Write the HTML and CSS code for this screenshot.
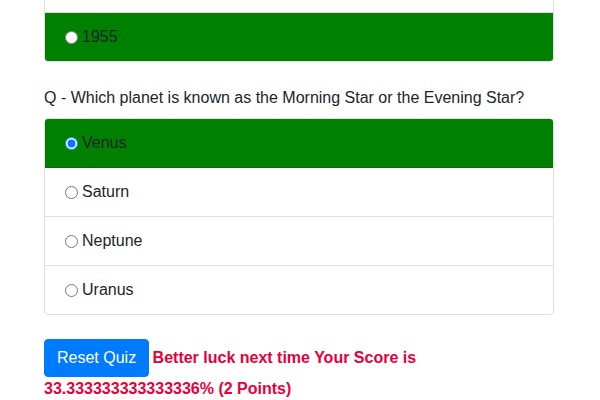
FILE: index.html
```html
<!DOCTYPE html>
<html>
<head>
<meta charset="utf-8">
<link rel="stylesheet" href="styles.css">
</head>
<body>
<div class="container">
  <ul class="list-group prev">
    <li class="list-group-item"></li>
    <li class="list-group-item"></li>
    <li class="list-group-item"></li>
    <li class="list-group-item correct"><input type="radio" name="q1">1955</li>
  </ul>
  <p class="question">Q - Which planet is known as the Morning Star or the Evening Star?</p>
  <ul class="list-group">
    <li class="list-group-item correct"><input type="radio" name="q2" checked>Venus</li>
    <li class="list-group-item"><input type="radio" name="q2">Saturn</li>
    <li class="list-group-item"><input type="radio" name="q2">Neptune</li>
    <li class="list-group-item"><input type="radio" name="q2">Uranus</li>
  </ul>
  <div class="result">
    <button class="btn">Reset Quiz</button>
    <span class="score">Better luck next time Your Score is 33.333333333333336% (2 Points)</span>
  </div>
</div>
</body>
</html>
```
FILE: styles.css
```css
html, body {
  margin: 0;
  padding: 0;
  background: #fff;
}
body {
  font-family: "Liberation Sans", Arial, sans-serif;
  font-size: 16px;
  line-height: 24px;
  color: #212529;
}
.container {
  width: 510px;
  margin-left: 44px;
}
.list-group {
  list-style: none;
  margin: 0;
  padding: 0;
  border: 1px solid #dfdfdf;
  border-radius: 4px;
  overflow: hidden;
}
.prev {
  margin-top: -135px;
}
.list-group-item {
  display: flex;
  align-items: center;
  padding: 0 20px;
  border-bottom: 1px solid #dfdfdf;
  box-sizing: border-box;
  height: 49px;
}
.list-group-item:last-child {
  border-bottom: 0;
  height: 48px;
}
.list-group-item.correct {
  background: #008000;
  border-color: #007000;
}
.list-group-item input {
  width: 13px;
  height: 13px;
  margin: 0 4px 0 0;
}
.question {
  margin: 24px 0 8px;
}
.result {
  margin-top: 24px;
}
.btn {
  display: inline-block;
  font-family: inherit;
  font-size: 16px;
  line-height: 24px;
  padding: 6px 12px;
  border: 1px solid #007bff;
  background: #007bff;
  color: #fff;
  border-radius: 4px;
  margin-right: -1px;
}
.score {
  color: #e5003a;
  font-weight: bold;
}
```
